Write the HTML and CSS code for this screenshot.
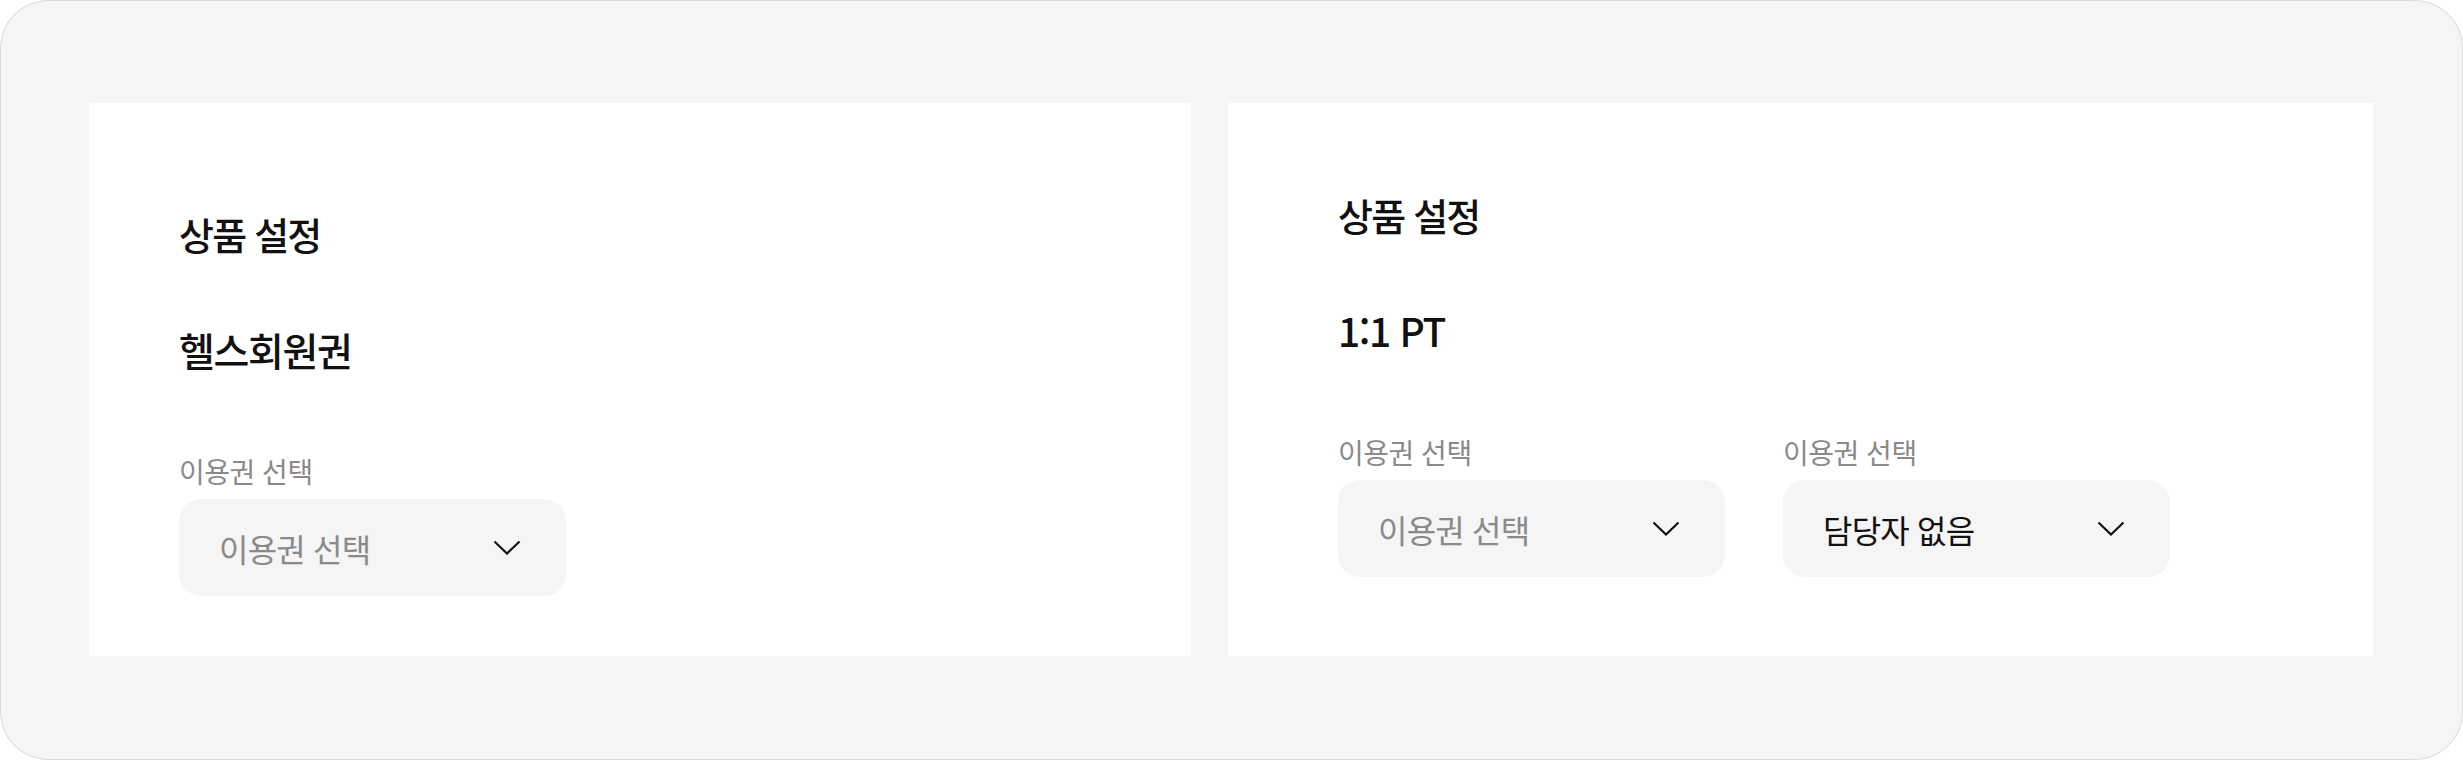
FILE: index.html
```html
<!DOCTYPE html>
<html lang="ko">
<head>
<meta charset="utf-8">
<title>상품 설정</title>
<link rel="stylesheet" href="styles.css">
</head>
<body>
<div class="frame">
  <section class="card card--left">
    <h2 class="card-title">상품 설정</h2>
    <p class="product-name">헬스회원권</p>
    <div class="fields">
      <div class="field">
        <span class="field-label">이용권 선택</span>
        <button class="select" type="button">
          <span class="select-value placeholder">이용권 선택</span>
          <svg class="chevron" width="28" height="15" viewBox="0 0 28 15"><path d="M1.5 1.5 L14 13.5 L26.5 1.5" fill="none" stroke="#111" stroke-width="2.2"/></svg>
        </button>
      </div>
    </div>
  </section>
  <section class="card card--right">
    <h2 class="card-title">상품 설정</h2>
    <p class="product-name">1:1 PT</p>
    <div class="fields">
      <div class="field">
        <span class="field-label">이용권 선택</span>
        <button class="select" type="button">
          <span class="select-value placeholder">이용권 선택</span>
          <svg class="chevron" width="28" height="15" viewBox="0 0 28 15"><path d="M1.5 1.5 L14 13.5 L26.5 1.5" fill="none" stroke="#111" stroke-width="2.2"/></svg>
        </button>
      </div>
      <div class="field">
        <span class="field-label">이용권 선택</span>
        <button class="select" type="button">
          <span class="select-value">담당자 없음</span>
          <svg class="chevron" width="28" height="15" viewBox="0 0 28 15"><path d="M1.5 1.5 L14 13.5 L26.5 1.5" fill="none" stroke="#111" stroke-width="2.2"/></svg>
        </button>
      </div>
    </div>
  </section>
</div>
</body>
</html>
```
FILE: styles.css
```css
* { box-sizing: border-box; }
html, body { margin: 0; padding: 0; background: #ffffff; }
body {
  font-family: "Noto Sans CJK KR", "Noto Sans", sans-serif;
  color: #111111;
}
.frame {
  width: 2463px;
  height: 760px;
  border: 1px solid #dadada;
  border-radius: 48px;
  background: #f5f5f5;
  padding: 102px 89px 103px 88px;
  display: grid;
  grid-template-columns: 1102px 1145px;
  column-gap: 37px;
}
.card {
  background: #ffffff;
  height: 553px;
  display: flex;
  flex-direction: column;
  align-items: flex-start;
}
.card--left { padding: 112px 0 0 90px; }
.card--right { padding: 93px 0 0 110px; }
.card-title {
  margin: 0;
  font-size: 38px;
  line-height: 38px;
  font-weight: 500;
  letter-spacing: -1.8px;
}
.product-name {
  margin: 77px 0 0;
  font-size: 39px;
  line-height: 39px;
  font-weight: 500;
  letter-spacing: -1.4px;
}
.fields {
  margin-top: 88px;
  display: flex;
  gap: 58px;
}
.field {
  display: flex;
  flex-direction: column;
  gap: 14px;
}
.field-label {
  font-size: 28px;
  line-height: 28px;
  color: #8a8a8a;
  letter-spacing: -0.5px;
}
.select {
  width: 387px;
  height: 97px;
  border: 0;
  border-radius: 22px;
  background: #f5f5f5;
  padding: 0 45px 0 40px;
  display: flex;
  align-items: center;
  justify-content: space-between;
  font-family: inherit;
  cursor: pointer;
}
.select-value {
  font-size: 32px;
  line-height: 32px;
  color: #111111;
  letter-spacing: -0.8px;
}
.select-value.placeholder { color: #8a8a8a; }
.chevron { display: block; }
```
